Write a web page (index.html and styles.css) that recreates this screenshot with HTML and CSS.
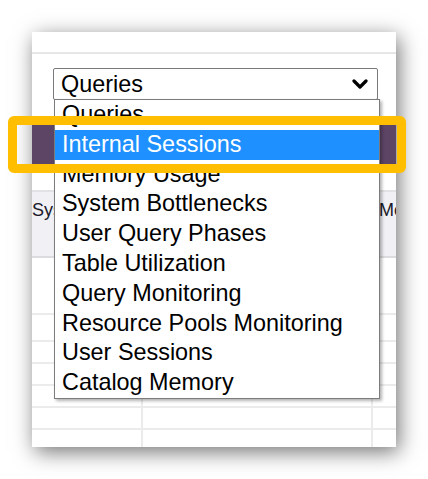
FILE: index.html
```html
<!DOCTYPE html>
<html lang="en">
<head>
<meta charset="utf-8">
<title>Queries dropdown</title>
<link rel="stylesheet" href="styles.css">
</head>
<body>
<div class="stage">
  <div class="card">
    <div class="topbar"></div>
    <div class="select-row">
      <div class="select">
        <span>Queries</span>
        <svg class="chev" width="16" height="10" viewBox="0 0 16 10"><polyline points="2,2 8,8 14,2" fill="none" stroke="#000" stroke-width="3.2" stroke-linecap="round" stroke-linejoin="round"/></svg>
      </div>
    </div>
    <div class="band"></div>
    <div class="table">
      <div class="row head">
        <div class="cell c1">Sys</div>
        <div class="cell c2"></div>
        <div class="cell c3">Me</div>
      </div>
      <div class="row tall"><div class="cell c1"></div><div class="cell c2"></div><div class="cell c3"></div></div>
      <div class="row mid"><div class="cell c1"></div><div class="cell c2"></div><div class="cell c3"></div></div>
      <div class="row"><div class="cell c1"></div><div class="cell c2"></div><div class="cell c3"></div></div>
      <div class="row"><div class="cell c1"></div><div class="cell c2"></div><div class="cell c3"></div></div>
      <div class="row"><div class="cell c1"></div><div class="cell c2"></div><div class="cell c3"></div></div>
      <div class="row"><div class="cell c1"></div><div class="cell c2"></div><div class="cell c3"></div></div>
      <div class="row"><div class="cell c1"></div><div class="cell c2"></div><div class="cell c3"></div></div>
    </div>
    <ul class="list">
      <li>Queries</li>
      <li class="sel">Internal Sessions</li>
      <li>Memory Usage</li>
      <li>System Bottlenecks</li>
      <li>User Query Phases</li>
      <li>Table Utilization</li>
      <li>Query Monitoring</li>
      <li>Resource Pools Monitoring</li>
      <li>User Sessions</li>
      <li>Catalog Memory</li>
    </ul>
  </div>
  <div class="highlight"></div>
</div>
</body>
</html>
```
FILE: styles.css
```css
html, body {
  margin: 0;
  padding: 0;
  background: #ffffff;
}
body {
  font-family: "Liberation Sans", Arial, sans-serif;
  color: #000;
}
.stage {
  position: relative;
  width: 428px;
  height: 479px;
  padding: 32px 0 0 32px;
  box-sizing: border-box;
  overflow: hidden;
}
.card {
  position: relative;
  width: 364px;
  height: 415px;
  background: #fff;
  overflow: hidden;
  box-shadow: 3px 5px 20px rgba(0, 0, 0, 0.55);
}
.topbar {
  height: 20px;
  border-bottom: 2px solid #e6e6e6;
}
.select-row {
  padding: 14px 0 0 21px;
}
.select {
  width: 325px;
  height: 32px;
  box-sizing: border-box;
  border: 1px solid #7a7a7a;
  border-radius: 2px;
  background: #fff;
  display: flex;
  align-items: center;
  justify-content: space-between;
  padding: 0 9px 0 7px;
  font-size: 23.4px;
}
.chev {
  display: block;
}
.band {
  margin-top: 20px;
  height: 48px;
  background: #5d4566;
}
.table {
  margin-top: 22px;
  border-top: 2px solid #e2e2e6;
}
.row {
  display: grid;
  grid-template-columns: 111px 230px 1fr;
  height: 22px;
  box-sizing: border-box;
  border-bottom: 2px solid #ebebeb;
}
.row.head {
  height: 66px;
  background: #f1f1f5;
  border-bottom: 2px solid #dcdce0;
}
.row.tall {
  height: 57px;
}
.row.mid {
  height: 27px;
}
.cell {
  border-right: 2px solid #ebebeb;
  overflow: hidden;
  white-space: nowrap;
}
.cell.c3 {
  border-right: none;
}
.head .cell {
  font-size: 18px;
  line-height: 22px;
  color: #1a1a2a;
  padding-top: 7px;
  border-right-color: #e2e2e6;
}
.head .c1 {
  padding-left: 0;
}
.head .c3 {
  padding-left: 6px;
}
.list {
  position: absolute;
  left: 22px;
  top: 67px;
  width: 324px;
  margin: 0;
  padding: 0;
  list-style: none;
  background: #fff;
  border: 1px solid #7c7c7c;
  box-shadow: 2px 2px 3px rgba(0, 0, 0, 0.3);
  font-size: 23.4px;
}
.list li {
  height: 29.8px;
  line-height: 29.8px;
  padding-left: 7px;
  white-space: nowrap;
}
.list li.sel {
  background: #1e90ff;
  color: #fff;
}
.highlight {
  position: absolute;
  left: 8px;
  top: 116px;
  width: 398px;
  height: 57px;
  box-sizing: border-box;
  border: 9.5px solid #ffbf00;
  border-radius: 6px;
}
```
